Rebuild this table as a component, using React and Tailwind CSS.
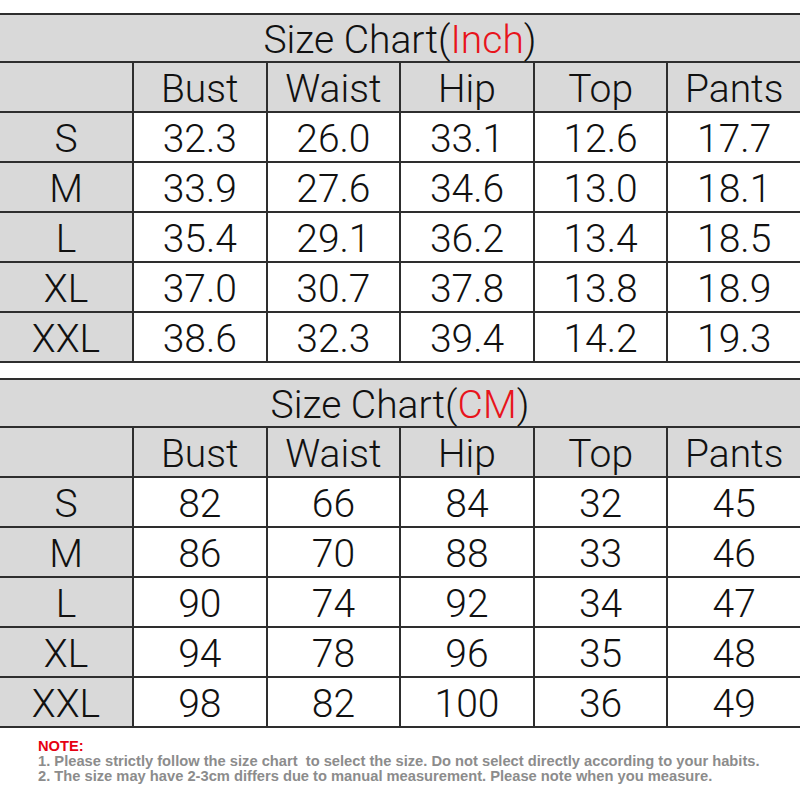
const cols = ['Bust', 'Waist', 'Hip', 'Top', 'Pants'];

const inchRows = [
  ['S', '32.3', '26.0', '33.1', '12.6', '17.7'],
  ['M', '33.9', '27.6', '34.6', '13.0', '18.1'],
  ['L', '35.4', '29.1', '36.2', '13.4', '18.5'],
  ['XL', '37.0', '30.7', '37.8', '13.8', '18.9'],
  ['XXL', '38.6', '32.3', '39.4', '14.2', '19.3'],
];

const cmRows = [
  ['S', '82', '66', '84', '32', '45'],
  ['M', '86', '70', '88', '33', '46'],
  ['L', '90', '74', '92', '34', '47'],
  ['XL', '94', '78', '96', '35', '48'],
  ['XXL', '98', '82', '100', '36', '49'],
];

function Row({ cells, header }) {
  return (
    <div className="grid grid-cols-[132px_repeat(5,1fr)] h-[50px] border-b-2 border-[#2e2e2e]">
      {cells.map((c, i) => (
        <div
          key={i}
          className={
            'flex items-center justify-center pt-[5px] ' +
            (i > 0 ? 'border-l-2 border-[#2e2e2e] ' : '') +
            (header || i === 0 ? 'bg-[#d9d9d9]' : 'bg-white')
          }
        >
          {c}
        </div>
      ))}
    </div>
  );
}

function Chart({ unit, rows }) {
  return (
    <div className="border-t-2 border-[#2e2e2e]">
      <div className="h-[48px] pt-[4px] bg-[#d9d9d9] border-b-2 border-[#2e2e2e] flex items-center justify-center">
        Size Chart(<span className="text-[#e8141c]">{unit}</span>)
      </div>
      <Row cells={['', ...cols]} header />
      {rows.map((r) => (
        <Row key={r[0]} cells={r} />
      ))}
    </div>
  );
}

export default function App() {
  return (
    <div className="w-[800px] h-[800px] bg-white overflow-hidden">
      <div className="pt-[13px] text-[39px] font-light leading-none text-[#111] [font-family:Roboto,'Noto_Sans',sans-serif]">
        <Chart unit="Inch" rows={inchRows} />
        <div className="h-[15px]" />
        <Chart unit="CM" rows={cmRows} />
      </div>
      <div className="pl-[38px] pt-[11px] text-[14.7px] leading-[15px] font-bold [font-family:'Liberation_Sans',Arial,sans-serif]">
        <p className="text-[#e60012]">NOTE:</p>
        <p className="text-[#8c8c8c]">1. Please strictly follow the size chart&nbsp; to select the size. Do not select directly according to your habits.</p>
        <p className="text-[#8c8c8c]">2. The size may have 2-3cm differs due to manual measurement. Please note when you measure.</p>
      </div>
    </div>
  );
}
